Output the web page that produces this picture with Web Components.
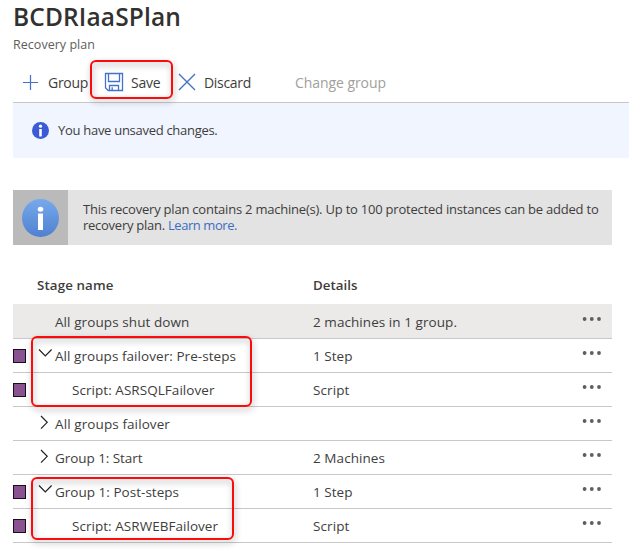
<!DOCTYPE html>
<html lang="en">
<head>
<meta charset="utf-8">
<title>BCDRIaaSPlan</title>
<style>
body { margin: 0; background: #fff; font-family: "Open Sans", "Noto Sans", sans-serif; color: #3e3d3c; }
</style>
</head>
<body>
<recovery-plan></recovery-plan>
<script>
// Single line of text whose tracking is adjusted to span a given width.
class FitText extends HTMLElement {
  constructor() {
    super();
    this.attachShadow({ mode: 'open' }).innerHTML = `
      <style>:host{display:inline-block;white-space:nowrap} span{display:inline-block;white-space:pre}</style><span><slot></slot></span>`;
  }
  connectedCallback() {
    const want = parseFloat(this.getAttribute('w'));
    const s = this.shadowRoot.querySelector('span');
    const n = this.textContent.length;
    const have = s.getBoundingClientRect().width;
    if (want && have) s.style.letterSpacing = ((want - have) / n).toFixed(3) + 'px';
  }
}

const icons = {
  plus: '<svg width="17" height="17" viewBox="0 0 18 18" fill="none" stroke="#4373c8" stroke-width="1.3"><path d="M9 1v16M1 9h16"/></svg>',
  save: '<svg width="20" height="20" viewBox="0 0 20 20" fill="none" stroke="#4373c8" stroke-width="1.3"><path d="M1.5 1.5H18.5V18.5H4.2L1.5 15.8ZM4.5 1.5V9.5H15.5V1.5M5.5 18.5V13.5H14.5V18.5M8.2 15.2V18.5"/></svg>',
  cross: '<svg width="18" height="18" viewBox="0 0 18 18" fill="none" stroke="#4373c8" stroke-width="1.4"><path d="M1 1L17 17M17 1L1 17"/></svg>'
};
class ToolButton extends HTMLElement {
  constructor() {
    super();
    this.attachShadow({ mode: 'open' }).innerHTML = `
      <style>:host{display:flex;align-items:center;font-size:14px;height:22px} :host([disabled]){color:#a19f9d} svg{display:block}
      .i{flex:none;margin-right:var(--gap,8px)} .i:empty{display:none}</style>
      <div class="i">${icons[this.getAttribute('icon')] || ''}</div><slot></slot>`;
  }
}

class UnsavedBar extends HTMLElement {
  constructor() {
    super();
    this.attachShadow({ mode: 'open' }).innerHTML = `
      <style>:host{display:flex;align-items:center;box-sizing:border-box;height:55px;padding:0 0 0 19px;background:#f0f5ff;font-size:13px;border-radius:0 0 0 2px}
      svg{margin-right:9px;flex:none} ::slotted(*){margin-top:-2px}</style>
      <svg width="17" height="17" viewBox="0 0 17 17"><circle cx="8.5" cy="8.5" r="8.5" fill="#3b5bd6"/><circle cx="8.5" cy="4.2" r="1.6" fill="#fff"/><path d="M7.2 7h2.6v7.5H7.2z" fill="#fff"/></svg>
      <slot></slot>`;
  }
}

class InfoBanner extends HTMLElement {
  constructor() {
    super();
    this.attachShadow({ mode: 'open' }).innerHTML = `
      <style>:host{display:flex;width:599px;height:55px;background:#e3e3e3;font-size:13px;line-height:16px}
      .i{width:55px;background:#bababa;display:flex;align-items:center;justify-content:center;flex:none}
      .t{padding:11px 0 0 15px} a{color:#3d6dc2}</style>
      <div class="i"><svg width="37" height="38" viewBox="0 0 37 38"><defs><linearGradient id="g" x2="0" y2="1"><stop offset="0" stop-color="#76a9ec"/><stop offset="1" stop-color="#5081d0"/></linearGradient></defs>
      <ellipse cx="18.5" cy="19" rx="18.5" ry="19" fill="url(#g)"/><ellipse cx="18.5" cy="10.2" rx="2.8" ry="2.5" fill="#fff"/><path d="M16 14.5h5v16.5h-5z" fill="#fff"/></svg></div>
      <div class="t"><div><fit-text w="515.5">This recovery plan contains 2 machine(s). Up to 100 protected instances can be added to</fit-text></div>
      <div><fit-text w="85">recovery plan. </fit-text><a><fit-text w="69">Learn more.</fit-text></a></div></div>`;
  }
}

class StageRow extends HTMLElement {
  constructor() {
    super();
    const a = n => this.getAttribute(n);
    const chev = { open: '<svg width="15" height="10" viewBox="0 0 15 10"><path d="M1 1.5L7.3 8L13.6 1.5"/></svg>',
      closed: '<svg width="15" height="15" viewBox="0 0 15 15"><path d="M3 2L9.2 8.3L3 14.6"/></svg>' }[a('state')] || '';
    this.attachShadow({ mode: 'open' }).innerHTML = `
      <style>:host{display:grid;grid-template-columns:25px 17px 258px 1fr 41px;align-items:center;box-sizing:border-box;height:34px;border-bottom:1px solid #c8c8c8;font-size:13.5px}
      :host([first]){height:35px;background:#ebeae9}
      .m{width:11px;height:12px;border:1px solid #15101a;background:#8a5291;margin-top:1px}
      .c{display:flex;justify-content:center;margin:-5px 2px 0 0} .c svg{flex:none;fill:none;stroke:#222;stroke-width:1.2}
      .n{padding-left:${a('nested') !== null ? 17 : 0}px}.n,.d{line-height:18px;height:18px}
      :host([first]) .n,:host([first]) .d{padding-top:1px}
      .dots{margin:-5px 0 0 10px;display:block}</style>
      <div>${a('marked') !== null ? '<div class="m"></div>' : ''}</div><div class="c">${chev}</div>
      <div class="n"><fit-text w="${a('nw')}">${a('name')}</fit-text></div>
      <div class="d">${a('details') ? `<fit-text w="${a('dw')}">${a('details')}</fit-text>` : ''}</div>
      <svg class="dots" width="22" height="6" viewBox="0 0 22 6" fill="#605e5c"><circle cx="3.6" cy="3" r="1.9"/><circle cx="10.8" cy="3" r="1.9"/><circle cx="18" cy="3" r="1.9"/></svg>`;
  }
}

// Red annotation frame laid over the page.
class CalloutBox extends HTMLElement {
  constructor() {
    super();
    this.attachShadow({ mode: 'open' }).innerHTML = `
      <style>:host{position:absolute;box-sizing:border-box;border:2px solid #ff0a0a;border-radius:6px;filter:drop-shadow(1px 3px 3px rgba(0,0,0,.35));pointer-events:none}</style>`;
  }
}

class RecoveryPlan extends HTMLElement {
  constructor() {
    super();
    this.attachShadow({ mode: 'open' }).innerHTML = `
      <style>
      :host{display:block;position:relative;width:629px;height:557px;overflow:hidden;box-sizing:border-box;padding-left:13px}
      h1{margin:0;font-size:24.5px;line-height:34px;font-weight:600;height:34px;color:#323130}
      .sub{font-size:12.5px;line-height:20px;color:#605e5c;height:28px;padding-top:1px}
      .bar{display:flex;align-items:center;height:40px;border-bottom:1px solid #c8c8c8;padding:0 0 1px 9px;box-sizing:border-box}
      .head{display:flex;height:38px;line-height:36px;font-weight:600;font-size:13.3px;padding:1px 0 0 24px;box-sizing:border-box}
      .head div:first-child{width:276px}
      info-banner{margin:32px 0 21px} .table{width:599px}
      </style>
      <h1><fit-text w="168">BCDRIaaSPlan</fit-text></h1>
      <div class="sub"><fit-text w="82">Recovery plan</fit-text></div>
      <div class="bar">
        <tool-button icon="plus" style="--gap:9px"><fit-text w="40">Group</fit-text></tool-button>
        <tool-button icon="save" style="margin-left:16px;--gap:7px"><fit-text w="29.5">Save</fit-text></tool-button>
        <tool-button icon="cross" style="margin-left:17px;--gap:8.5px"><fit-text w="47">Discard</fit-text></tool-button>
        <tool-button disabled style="margin-left:44px"><fit-text w="91">Change group</fit-text></tool-button>
      </div>
      <unsaved-bar><fit-text w="159.5">You have unsaved changes.</fit-text></unsaved-bar>
      <info-banner></info-banner>
      <div class="table">
        <div class="head"><div><fit-text w="76.5">Stage name</fit-text></div><div><fit-text w="44.5">Details</fit-text></div></div>
        <stage-row first name="All groups shut down" nw="134.5" details="2 machines in 1 group." dw="144"></stage-row>
        <stage-row marked state="open" name="All groups failover: Pre-steps" nw="181" details="1 Step" dw="39.5"></stage-row>
        <stage-row marked nested name="Script: ASRSQLFailover" nw="142.5" details="Script" dw="36.5"></stage-row>
        <stage-row state="closed" name="All groups failover" nw="115"></stage-row>
        <stage-row state="closed" name="Group 1: Start" nw="87.5" details="2 Machines" dw="72"></stage-row>
        <stage-row marked state="open" name="Group 1: Post-steps" nw="124" details="1 Step" dw="39.5"></stage-row>
        <stage-row marked nested name="Script: ASRWEBFailover" nw="146" details="Script" dw="36.5"></stage-row>
      </div>
      <callout-box style="left:90px;top:60px;width:83px;height:39px"></callout-box>
      <callout-box style="left:31px;top:336px;width:221px;height:71px"></callout-box>
      <callout-box style="left:31px;top:477px;width:203px;height:63px"></callout-box>`;
  }
}
customElements.define('fit-text', FitText);
customElements.define('tool-button', ToolButton);
customElements.define('unsaved-bar', UnsavedBar);
customElements.define('info-banner', InfoBanner);
customElements.define('stage-row', StageRow);
customElements.define('callout-box', CalloutBox);
customElements.define('recovery-plan', RecoveryPlan);
</script>
</body>
</html>
